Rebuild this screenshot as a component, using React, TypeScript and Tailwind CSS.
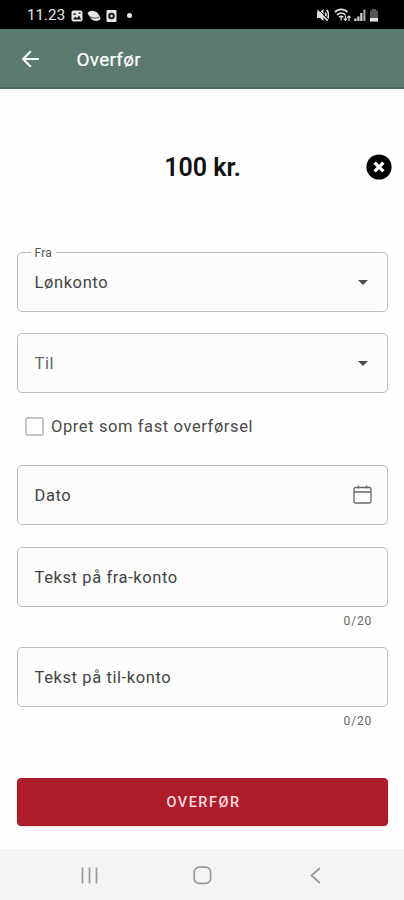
import React from "react";

function StatusBar() {
  return (
    <div className="flex h-[29px] items-center bg-black pl-[27px] pr-[25px] text-[#e8e8e8]">
      <span className="w-[38px] whitespace-nowrap text-[15px] leading-[30px] tracking-[0.1px]">11.23</span>
      <svg className="ml-[6px] mt-[2px]" width="12" height="12" viewBox="0 0 12 12">
        <rect x="0.5" y="0.5" width="11" height="11" rx="2" fill="#e4e4e4" />
        <path d="M2 9.5 4.3 6.5 6 8.3 8 5.5 10.2 9.5Z" fill="#111" />
        <path d="M2.3 4.2H5M7.7 3.2H9.5" stroke="#111" strokeWidth="1.2" />
      </svg>
      <svg className="ml-[4px] mt-[2px]" width="14" height="12" viewBox="0 0 14 12">
        <path d="M.5 3.2C2-.2 8-.2 11 3.5L13.6 8.3C12.8 11.4 7 12 4.2 9Z" fill="#e4e4e4" />
        <path d="M1 5.2C4 8.2 9 8.8 12 7.2" fill="none" stroke="#333" strokeWidth=".9" />
      </svg>
      <svg className="ml-[5px] mt-[2px]" width="11" height="12" viewBox="0 0 11 12">
        <rect x="0.5" y="0" width="10" height="12" rx="1" fill="#e4e4e4" />
        <circle cx="5.5" cy="6" r="3.2" fill="#111" />
        <path d="M4 6h3.3M5.7 4.4v3.2" stroke="#e4e4e4" strokeWidth="1.2" />
      </svg>
      <span className="ml-[10px] mt-[2px] size-[5px] rounded-full bg-[#e8e8e8]" />
      <div className="ml-auto mt-px flex items-center">
        <svg width="12" height="12" viewBox="0 0 12 12">
          <path d="M0 3H3L6.5 0V12L3 9H0Z" fill="#ddd" />
          <path d="M8 3.8C9.4 5 9.4 7 8 8.2M9.8 1C12 4 12 8 9.8 11.2" fill="none" stroke="#ddd" strokeWidth="1.7" />
          <path d="M1.5 .5 11.5 10.5" stroke="#000" strokeWidth="1" />
          <path d="M.3 1.2 10.5 11.5" stroke="#ddd" strokeWidth="1.4" />
        </svg>
        <svg className="ml-[5px]" width="17" height="14" viewBox="0 0 17 14">
          <path d="M.8 4.2C4.2.4 10.2.4 13.6 4.2M3 7C5.5 4.3 9 4.3 11.4 7M5.2 9.4C6.6 8 7.9 8 9.2 9.4" fill="none" stroke="#ddd" strokeWidth="1.6" />
          <path d="M7.2 9.2V12.5M11.5 7.5v5M9.7 10.7l1.8 1.8 1.6-1.8M15 13V8M13.3 9.7 15 8l1.7 1.7" fill="none" stroke="#ddd" strokeWidth="1.2" />
        </svg>
        <svg className="ml-[3px]" width="12" height="12" viewBox="0 0 12 12">
          <path d="M.2 9.5H2.5V12H.2ZM3.2 7.5H5.5V12H3.2ZM6.2 4H8.5V12H6.2Z" fill="#ccc" />
          <path d="M9.4.5H11.4V12H9.4Z" fill="#aaa" />
        </svg>
        <svg className="ml-[3px]" width="10" height="13" viewBox="0 0 10 13">
          <path d="M3 0H7V1.5H9V12.5H1V1.5H3Z" fill="#555" />
          <path d="M1 9H9V12.5H1Z" fill="#e0e0e0" />
        </svg>
      </div>
    </div>
  );
}

function Field({ label, className, children }: { label: React.ReactNode; className?: string; children?: React.ReactNode }) {
  return (
    <div
      className={`relative flex h-[60px] items-center justify-between rounded-[5px] border-[1.5px] border-[#bdbdbd] bg-[#fcfcfc] pl-[16.5px] text-[16.5px] tracking-[0.6px] text-[#444] ${className ?? ""}`}
    >
      <span className="pt-[2px]">{label}</span>
      {children}
    </div>
  );
}

function Caret() {
  return (
    <svg className="mr-[19px]" width="10" height="5" viewBox="0 0 10 5">
      <path d="M0 0H10L5 5Z" fill="#4c4c4c" />
    </svg>
  );
}

export default function App() {
  return (
    <div className="flex h-[900px] w-[404px] flex-col overflow-hidden bg-[#fefefe] font-['Roboto',sans-serif]">
      <StatusBar />
      <header className="flex h-[60px] items-center border-b-2 border-[#50695f] bg-[#5b7a70] pl-[21px] text-white">
        <svg className="mt-[2px]" width="19" height="18" viewBox="0 0 19 18" fill="none" stroke="#fff" strokeWidth="2">
          <path d="M18 9H2M9.8 1.2 2 9l7.8 7.8" />
        </svg>
        <h1 className="ml-[36.5px] mt-[4px] text-[19px] tracking-[0.25px] [-webkit-text-stroke:0.2px_white]">Overfør</h1>
      </header>

      <main className="flex flex-1 flex-col pl-[17px] pr-[16px]">
        <div className="mt-[60px] grid h-[38px] grid-cols-[1fr_auto_1fr] items-center">
          <span />
          <span className="text-[25px] font-semibold text-[#101010]">100 kr.</span>
          <svg className="-mr-[4px] -mt-[2px] justify-self-end" width="26" height="26" viewBox="0 0 26 26">
            <circle cx="13" cy="13" r="12.6" fill="#000" />
            <path d="m8.6 8.6 8.8 8.8M17.4 8.6l-8.8 8.8" stroke="#fff" strokeWidth="3.3" />
          </svg>
        </div>

        <Field className="mt-[65px]" label="Lønkonto">
          <span className="absolute -top-[7px] left-[12.5px] bg-[#fefefe] px-[4px] text-[12px] leading-[14px] tracking-[0.2px] text-[#555]">Fra</span>
          <Caret />
        </Field>
        <Field className="mt-[21px]" label={<span className="text-[#666]">Til</span>}>
          <Caret />
        </Field>

        <label className="ml-[8px] mt-[24px] flex h-[19px] items-center text-[16.5px] tracking-[0.6px] text-[#4a4a4a]">
          <span className="mr-[7px] size-[19px] rounded-[2px] border-2 border-[#c6c6c6] bg-white" />
          <span className="pt-[2px]">Opret som fast overførsel</span>
        </label>

        <Field className="mt-[29px]" label="Dato">
          <svg className="mb-px mr-[15px]" width="19" height="19" viewBox="0 0 19 19" fill="none" stroke="#666" strokeWidth="1.3">
            <rect x="1" y="2.5" width="17" height="15.5" rx="1.8" />
            <path d="M1 7H18M5.5 .5V3.5M13.5 .5V3.5" />
          </svg>
        </Field>
        <Field className="mt-[22px]" label="Tekst på fra-konto" />
        <span className="mr-[16px] mt-[6px] self-end text-[12px] leading-[16px] tracking-[0.8px] text-[#666]">0/20</span>
        <Field className="mt-[18px]" label="Tekst på til-konto" />
        <span className="mr-[16px] mt-[6px] self-end text-[12px] leading-[16px] tracking-[0.8px] text-[#666]">0/20</span>

        <button className="mt-[49px] h-[48px] w-full rounded-[4px] border border-[#a81420] bg-[#af1d2b] pl-[2px] pt-px text-[14.5px] font-medium tracking-[1.5px] text-[#f6dde0] shadow-sm">
          OVERFØR
        </button>
      </main>

      <nav className="flex h-[51px] items-center bg-[#f4f4f4] pl-[81px] pt-px text-[#999]">
        <svg width="17" height="17" viewBox="0 0 17 17" stroke="currentColor" strokeWidth="1.7">
          <path d="M1.5 0.5V16.5M8.5 0.5V16.5M15.5 0.5V16.5" />
        </svg>
        <svg className="ml-[95px]" width="19" height="19" viewBox="0 0 19 19" fill="none" stroke="currentColor" strokeWidth="1.7">
          <rect x="1.2" y="1.2" width="16.4" height="16.2" rx="5" />
        </svg>
        <svg className="ml-[98px]" width="11" height="17" viewBox="0 0 11 17" fill="none" stroke="currentColor" strokeWidth="1.7">
          <path d="M10 1 1.5 8.5 10 16" />
        </svg>
      </nav>
    </div>
  );
}
